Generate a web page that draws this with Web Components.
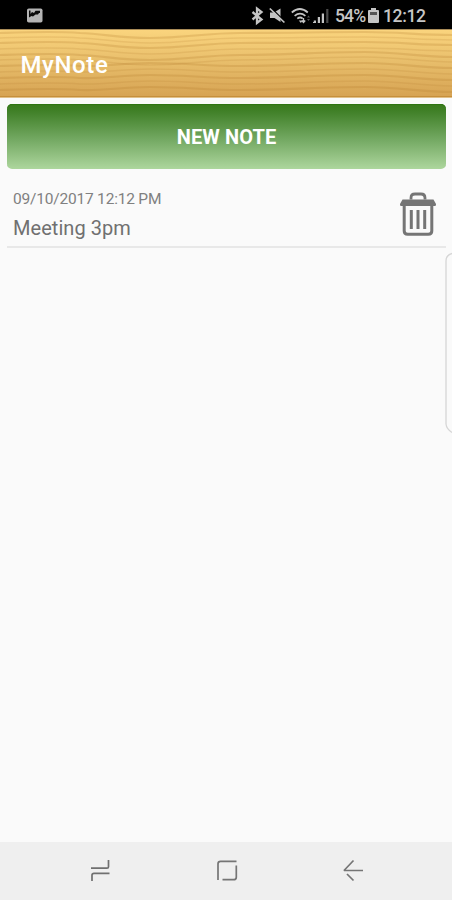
<!DOCTYPE html>
<html lang="en">
<head>
<meta charset="utf-8">
<meta name="viewport" content="width=device-width, initial-scale=1">
<title>MyNote</title>
<style>
    html, body {
        margin: 0;
        height: 100%;
    }
    body {
        font-family: Roboto, "Liberation Sans", sans-serif;
        background: #fafafa;
        overflow: hidden;
    }
</style>
</head>
<body>
<note-app>
    <status-bar slot="status" battery="54%" time="12:12"></status-bar>
    <wood-toolbar slot="toolbar">MyNote</wood-toolbar>
    <new-button>NEW NOTE</new-button>
    <note-item>
        <span slot="date">09/10/2017 12:12 PM</span>
        <span>Meeting 3pm</span>
    </note-item>
    <edge-handle slot="edge"></edge-handle>
    <nav-bar slot="nav"></nav-bar>
</note-app>

<script>
class NoteApp extends HTMLElement {
    constructor() {
        super();
        this.attachShadow({ mode: 'open' });
        this.shadowRoot.innerHTML = `
            <style>
                :host {
                    display: flex;
                    flex-direction: column;
                    height: 100vh;
                    position: relative;
                }
                main {
                    flex: 1;
                    padding: 6px 6px 0 7px;
                    background: #fafafa;
                }
            </style>
            <slot name="status"></slot>
            <slot name="toolbar"></slot>
            <main><slot></slot></main>
            <slot name="nav"></slot>
            <slot name="edge"></slot>
        `;
    }
}

class StatusBar extends HTMLElement {
    constructor() {
        super();
        this.attachShadow({ mode: 'open' });
        this.shadowRoot.innerHTML = `
            <style>
                :host {
                    display: flex;
                    align-items: center;
                    box-sizing: border-box;
                    height: 29px;
                    padding: 3px 27px 0 27px;
                    background: #000;
                    color: #c6c6c6;
                    font-size: 17.6px;
                    font-weight: 500;
                    line-height: 26px;
                }
                svg {
                    display: block;
                    flex: none;
                }
                .spacer {
                    flex: 1;
                }
                .battery {
                    width: 33px;
                    letter-spacing: -0.9px;
                    margin-left: 6px;
                }
                .time {
                    width: 42px;
                    margin-left: 4px;
                    letter-spacing: -0.4px;
                    white-space: nowrap;
                }
            </style>
            <svg width="16" height="16" viewBox="0 0 16 16">
                <rect x="0" y="0.500" width="15.500" height="14" rx="1.800" fill="#b4b4b4"/>
                <path d="M2 2.500v7l2.500-1.500 1.500.5 2.500-2h2.500l1-1.500H13V2.700H8.500L7 5 5 4 3.500 6V2.500z" fill="#0a0a0a"/>
            </svg>
            <span class="spacer"></span>
            <!-- bluetooth, mute, wifi, signal -->
            <svg width="78" height="20" viewBox="251 6 78 20" fill="none" stroke="#c4c4c4">
                <path d="M252.500 12l9 7.500-4.500 3.500V8.500l4.500 3.500-9 7.500" stroke-width="2.300"/>
                <path d="M270 12.500h4l6.500-4v13.500l-6-4H270z" fill="#c4c4c4" stroke="none"/>
                <path d="M270.800 7.500l14 14" stroke="#000" stroke-width="1.300"/>
                <path d="M269.800 8.500l14.600 14" stroke-width="1.700"/>
                <path d="M291.800 12.500q8-7 16 0M294.600 15.800q5.400-4.500 10.800 0M297.300 18.600q2.800-2.200 5.400 0" stroke-width="1.700"/>
                <path d="M298.800 20.500h4l-2 2.500z" fill="#c4c4c4" stroke="none"/>
                <path d="M303.500 18v4M301.800 20.500l1.700 2 1.700-2" stroke-width="1.300"/>
                <path d="M307 17.500l1.500-2 1.500 2zM307 19l1.500 2 1.500-2z" fill="#555" stroke="none"/>
                <path d="M314.900 20.500V23M318.900 17v6M322.900 13.500V23" stroke-width="2.200"/>
                <path d="M313 22.500h2" stroke-width="1"/>
                <path d="M327.300 9v14" stroke="#4a4a4a" stroke-width="2.200"/>
            </svg>
            <span class="battery"></span>
            <svg width="11" height="17" viewBox="0 0 11 17">
                <path d="M3 0h5v2h2q1 0 1 1v11q0 1-1 1H1q-1 0-1-1V3q0-1 1-1h2z" fill="#c4c4c4"/>
                <path d="M2 4h7v3H2z" fill="#555"/>
            </svg>
            <span class="time"></span>
        `;
    }

    connectedCallback() {
        this.shadowRoot.querySelector('.battery').textContent = this.getAttribute('battery');
        this.shadowRoot.querySelector('.time').textContent = this.getAttribute('time');
    }
}

class WoodToolbar extends HTMLElement {
    constructor() {
        super();
        this.attachShadow({ mode: 'open' });
        this.shadowRoot.innerHTML = `
            <style>
                :host {
                    display: grid;
                    align-items: center;
                    height: 69px;
                    color: #fff;
                    font-size: 24px;
                    font-weight: 500;
                    line-height: 28px;
                }
                svg, .title {
                    grid-area: 1 / 1;
                }
                svg {
                    display: block;
                }
                .title {
                    padding: 3px 0 0 20.5px;
                    letter-spacing: 0.6px;
                }
            </style>
            <svg width="452" height="69" viewBox="0 0 452 69">
                <defs>
                    <linearGradient id="wood" x2="0" y2="1">
                        <stop offset="0" stop-color="#fbd57e"/>
                        <stop offset="0.45" stop-color="#e9bf6c"/>
                        <stop offset="1" stop-color="#d6a252"/>
                    </linearGradient>
                </defs>
                <rect width="452" height="69" fill="url(#wood)"/>
                <g class="grain" fill="none" stroke="#b97f30"></g>
                <rect width="452" height="1" fill="#a98b57"/>
                <rect y="67" width="452" height="1.500" fill="#c68f3c"/>
                <rect y="68.500" width="452" height="0.500" fill="#f4e6cc"/>
            </svg>
            <div class="title"><slot></slot></div>
        `;
        this.drawGrain();
    }

    // Long grain lines: they dip near the middle left and rise again on the right
    drawGrain() {
        const grain = this.shadowRoot.querySelector('.grain');
        const rows = [4, 9, 14, 20, 26, 31, 37, 43, 49, 55, 61];
        let html = '';
        rows.forEach((y, i) => {
            const dip = i < 6 ? 5 : -3;
            const swell = i > 3 ? 3 : 1;
            html += `<path d="M0 ${y} C30 ${y - 1} 55 ${y - 2} 80 ${y}
                C105 ${y + 1} 120 ${y + dip} 150 ${y + dip}
                C185 ${y + dip} 205 ${y} 240 ${y}
                C290 ${y} 320 ${y - swell} 365 ${y - swell}
                C400 ${y - swell} 420 ${y + 2} 452 ${y + 2}"
                stroke-width="${i % 2 ? 1.5 : 2.2}" opacity="${i % 2 ? 0.18 : 0.25}"/>`;
        });
        grain.innerHTML = html;
    }
}

class NewButton extends HTMLElement {
    constructor() {
        super();
        this.attachShadow({ mode: 'open' });
        this.shadowRoot.innerHTML = `
            <style>
                :host {
                    display: block;
                }
                button {
                    display: block;
                    width: 100%;
                    height: 65px;
                    padding: 1px 0 0;
                    border: none;
                    border-radius: 5px;
                    background: linear-gradient(#397a1b, #418129 12%, #74a963 55%, #add69d);
                    box-shadow: inset 0 1px #2f7412;
                    color: #fff;
                    font: bold 20px/24px Roboto, sans-serif;
                    letter-spacing: 0.1px;
                }
            </style>
            <button><slot></slot></button>
        `;
    }
}

class NoteItem extends HTMLElement {
    constructor() {
        super();
        this.attachShadow({ mode: 'open' });
        this.shadowRoot.innerHTML = `
            <style>
                :host {
                    display: flex;
                    justify-content: space-between;
                    box-sizing: border-box;
                    height: 79px;
                    padding: 21px 9px 0 6px;
                    border-bottom: 2px solid #e8e8e8;
                }
                .date {
                    color: #808080;
                    font-size: 15.5px;
                    line-height: 18px;
                    letter-spacing: -0.2px;
                }
                .text {
                    margin-top: 8px;
                    color: #707070;
                    font-size: 20px;
                    line-height: 24px;
                    letter-spacing: 0.05px;
                }
                svg {
                    display: block;
                }
            </style>
            <div>
                <div class="date"><slot name="date"></slot></div>
                <div class="text"><slot></slot></div>
            </div>
            <svg width="38" height="46" viewBox="0 0 38 46" fill="none" stroke="#757575">
                <path d="M12 9.500V8q0-4 4-4h6q4 0 4 4v1.500" stroke-width="2.800"/>
                <path d="M3.500 9.500h31l2.500 4.500q.3 2-1 2H2q-1.300 0-1-2z" fill="#757575" stroke="none"/>
                <path d="M5.200 15v26q0 3.300 3.500 3.300h20.600q3.500 0 3.500-3.300V15" stroke-width="3"/>
                <path d="M12.300 20v19M19 20v19M25.700 20v19" stroke-width="3"/>
            </svg>
        `;
    }
}

class EdgeHandle extends HTMLElement {
    constructor() {
        super();
        this.attachShadow({ mode: 'open' });
        this.shadowRoot.innerHTML = `
            <style>
                :host {
                    position: absolute;
                    right: 0;
                    top: 252px;
                }
                svg {
                    display: block;
                }
            </style>
            <svg width="7" height="182" viewBox="0 0 7 182" fill="none" stroke="#d6d6d6">
                <path d="M7 1.500Q1 3 1 9v163Q1.500 177 7 180.500" stroke-width="1.300"/>
            </svg>
        `;
    }
}

class NavBar extends HTMLElement {
    constructor() {
        super();
        this.attachShadow({ mode: 'open' });
        this.shadowRoot.innerHTML = `
            <style>
                :host {
                    display: flex;
                    justify-content: space-between;
                    align-items: center;
                    box-sizing: border-box;
                    height: 58px;
                    padding: 0 88px 2px 89px;
                    background: #efefef;
                }
                svg {
                    display: block;
                }
            </style>
            <svg width="22" height="24" viewBox="0 0 22 24" fill="none" stroke="#707070" stroke-width="1.700">
                <path d="M2 10.200h16q1.500 0 1.500-1.500V2M20.500 15.300H5q-2 0-2 2V23"/>
            </svg>
            <svg width="22" height="24" viewBox="0 0 22 24" fill="none" stroke="#757575" stroke-width="1.700">
                <path d="M20.500 3.300H4.500q-2.500 0-2.500 2.500V22M6.500 21.700h11q2.800 0 2.800-2.500V7.500"/>
            </svg>
            <svg width="22" height="24" viewBox="0 0 22 24" fill="none" stroke="#757575" stroke-width="1.700">
                <path d="M11.500 2.500L2 12.500h19" stroke-linejoin="bevel"/>
                <path d="M5 16l6.500 6.500"/>
            </svg>
        `;
    }
}

customElements.define('note-app', NoteApp);
customElements.define('status-bar', StatusBar);
customElements.define('wood-toolbar', WoodToolbar);
customElements.define('new-button', NewButton);
customElements.define('note-item', NoteItem);
customElements.define('edge-handle', EdgeHandle);
customElements.define('nav-bar', NavBar);
</script>
</body>
</html>
